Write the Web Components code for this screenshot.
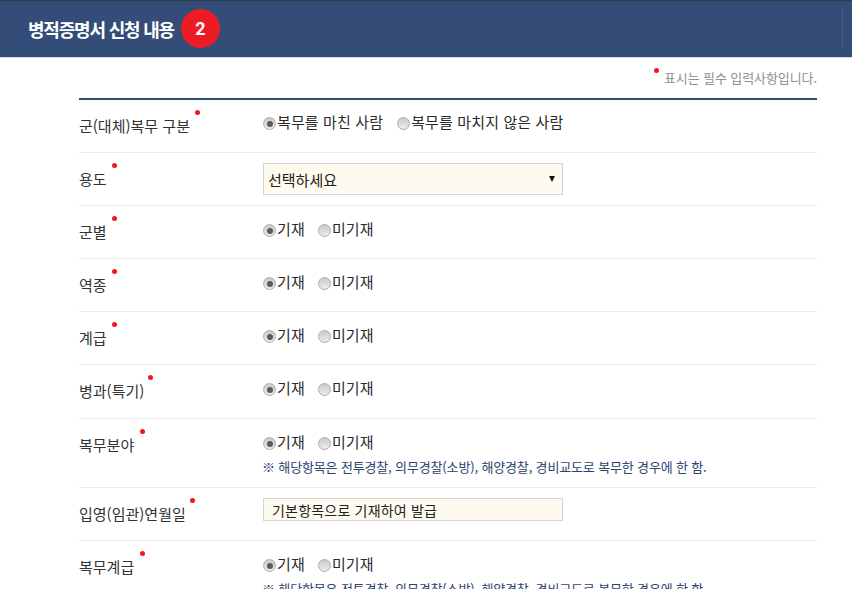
<!DOCTYPE html>
<html lang="ko">
<head>
<meta charset="utf-8">
<title>병적증명서 신청 내용</title>
<style>
  html, body { margin: 0; height: 589px; overflow: hidden; background: #fff; }
  body { font-family: "Noto Sans CJK KR", "Noto Sans", sans-serif; color: #333; }
</style>
</head>
<body>
<section-header step="2">병적증명서 신청 내용</section-header>
<required-note>표시는 필수 입력사항입니다.</required-note>
<form-table>
  <form-row label="군(대체)복무 구분" dot="116">
    <radio-pair first="복무를 마친 사람" second="복무를 마치지 않은 사람" gap="14" style="margin-top:1px"></radio-pair>
  </form-row>
  <form-row label="용도" dot="33">
    <select-box>선택하세요</select-box>
  </form-row>
  <form-row label="군별" dot="33"><radio-pair first="기재" second="미기재"></radio-pair></form-row>
  <form-row label="역종" dot="33"><radio-pair first="기재" second="미기재"></radio-pair></form-row>
  <form-row label="계급" dot="33"><radio-pair first="기재" second="미기재"></radio-pair></form-row>
  <form-row label="병과(특기)" dot="69" style="height:54px"><radio-pair first="기재" second="미기재"></radio-pair></form-row>
  <form-row label="복무분야" dot="61" style="height:69px">
    <radio-pair first="기재" second="미기재"></radio-pair>
    <hint-text>※ 해당항목은 전투경찰, 의무경찰(소방), 해양경찰, 경비교도로 복무한 경우에 한 함.</hint-text>
  </form-row>
  <form-row label="입영(임관)연월일" dot="111"><fixed-value>기본항목으로 기재하여 발급</fixed-value></form-row>
  <form-row label="복무계급" dot="61" style="height:69px">
    <radio-pair first="기재" second="미기재"></radio-pair>
    <hint-text>※ 해당항목은 전투경찰, 의무경찰(소방), 해양경찰, 경비교도로 복무한 경우에 한 함.</hint-text>
  </form-row>
</form-table>

<script>
// small helper so every element just declares its html
function shadow(el, html) {
  el.attachShadow({ mode: 'open' }).innerHTML = html;
}

class SectionHeader extends HTMLElement {
  connectedCallback() {
    shadow(this, `
      <style>
        :host { display: flex; align-items: center; box-sizing: border-box; height: 58px; padding: 0 0 1px 28px;
          background: #334c78; border-top: 1px solid #333a48; border-bottom: 1px solid #d8dbe2; position: relative; }
        h2 { margin: 0; font: 700 18px "Noto Sans CJK KR", sans-serif; color: #fff; letter-spacing: -1.2px; }
        .step { display: flex; align-items: center; justify-content: center; width: 39px; height: 39px; margin-left: 7px;
          border-radius: 50%; background: #ed1c24; color: #fff; font: 700 18px Roboto, sans-serif; }
        .edge { position: absolute; right: 9px; top: 7px; width: 1px; height: 40px; background: #4a6088; }
      </style>
      <h2><slot></slot></h2><span class="step">${this.getAttribute('step')}</span><span class="edge"></span>`);
  }
}

class RequiredNote extends HTMLElement {
  connectedCallback() {
    shadow(this, `
      <style>
        :host { display: flex; justify-content: flex-end; box-sizing: border-box; height: 40px; padding: 10px 35px 0 0;
          font: 13px "Noto Sans CJK KR", sans-serif; color: #8f8f8f; letter-spacing: -.09px; }
        i { width: 5px; height: 5px; margin: 0 5px 0 0; border-radius: 50%; background: #f5141e; }
      </style>
      <i></i><span><slot></slot></span>`);
  }
}

class FormTable extends HTMLElement {
  connectedCallback() {
    shadow(this, `
      <style>
        :host { display: block; margin: 0 35px 0 79px; border-top: 2px solid #334c78; }
      </style>
      <slot></slot>`);
  }
}

class FormRow extends HTMLElement {
  connectedCallback() {
    shadow(this, `
      <style>
        :host { display: grid; grid-template-columns: 184px 1fr; box-sizing: border-box; height: 53px;
          border-bottom: 1px solid #ececec; }
        .label { position: relative; padding-top: 15px; font-size: 15px; line-height: 22px; color: #333; }
        .dot { position: absolute; top: 10px; width: 5px; height: 5px; border-radius: 50%; background: #f5141e; }
        .field { padding-top: 10px; }
      </style>
      <div class="label">${this.getAttribute('label')}<span class="dot" style="left:${this.getAttribute('dot')}px"></span></div>
      <div class="field"><slot></slot></div>`);
  }
}

class RadioPair extends HTMLElement {
  connectedCallback() {
    const gap = this.getAttribute('gap') || 13;
    shadow(this, `
      <style>
        :host { display: flex; margin-top: 2px; font-size: 15px; line-height: 22px; color: #2b2b2b; letter-spacing: .13px; }
        label { display: flex; align-items: center; }
        label + label { margin-left: ${gap}px; }
        .radio { box-sizing: border-box; display: flex; align-items: center; justify-content: center; width: 13px; height: 13px;
          margin: 3px 1px 0 0; flex: none; border: 1px solid #adadad; border-radius: 50%;
          background: linear-gradient(#c9c9c9, #ececec); }
        .radio i { width: 6px; height: 6px; border-radius: 50%; background: #5a5a5a; }
      </style>
      <label><span class="radio"><i></i></span>${this.getAttribute('first')}</label>
      <label><span class="radio"></span>${this.getAttribute('second')}</label>`);
  }
}

class SelectBox extends HTMLElement {
  connectedCallback() {
    shadow(this, `
      <style>
        :host { display: flex; align-items: center; justify-content: space-between; box-sizing: border-box;
          width: 300px; height: 32px; padding: 0 7px 0 4px; background: #fffaf0; border: 1px solid #d5d5d5;
          font-size: 15px; color: #222; }
        b { width: 0; height: 0; border: 3.5px solid transparent; border-top: 6px solid #111; border-bottom: 0; }
      </style>
      <span><slot></slot></span><b></b>`);
  }
}

class FixedValue extends HTMLElement {
  connectedCallback() {
    shadow(this, `
      <style>
        :host { display: flex; align-items: center; box-sizing: border-box; width: 300px; height: 23px;
          padding-left: 8px; background: #fffaf0; border: 1px solid #d5d5d5; font-size: 14px; letter-spacing: .2px; color: #222; }
      </style>
      <slot></slot>`);
  }
}

class HintText extends HTMLElement {
  connectedCallback() {
    shadow(this, `
      <style>
        :host { display: block; margin-top: 5px; margin-left: -1px; font-size: 13px; line-height: 18px; color: #2c4470; letter-spacing: -.15px; white-space: nowrap; }
      </style>
      <slot></slot>`);
  }
}

customElements.define('section-header', SectionHeader);
customElements.define('required-note', RequiredNote);
customElements.define('form-table', FormTable);
customElements.define('form-row', FormRow);
customElements.define('radio-pair', RadioPair);
customElements.define('select-box', SelectBox);
customElements.define('fixed-value', FixedValue);
customElements.define('hint-text', HintText);
</script>
</body>
</html>
